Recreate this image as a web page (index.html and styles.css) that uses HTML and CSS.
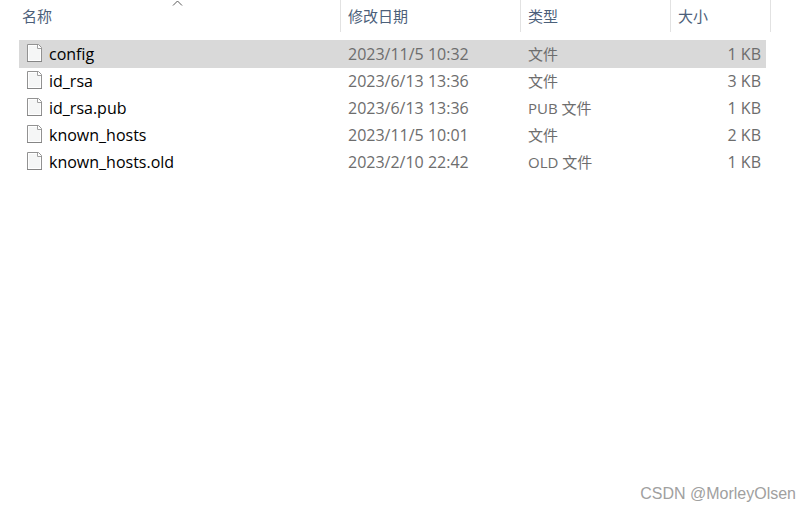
FILE: index.html
```
<!DOCTYPE html>
<html lang="zh-CN">
<head>
    <meta charset="UTF-8">
    <meta name="viewport" content="width=device-width, initial-scale=1.0">
    <title>.ssh</title>
    <link rel="stylesheet" href="styles.css">
</head>
<body>
    <!-- Shared file icon -->
    <svg class="symbols" aria-hidden="true">
        <symbol id="file-icon" viewBox="0 0 15 19">
            <path d="M.5.5H11.5L14.5 3.5V17.5H.5Z" fill="#fff" stroke="#929292"/>
            <path d="M2 2H10V5H13V16H2Z" fill="#f5f6f6"/>
            <path d="M10.5 1V4.5H14" fill="#fff" stroke="#a0a0a0"/>
            <path d="M0 17.5H15" stroke="#858585"/>
        </symbol>
    </svg>

    <!-- File List -->
    <main class="content">
        <table class="file-list">
            <colgroup>
                <col>
                <col class="col-date">
                <col class="col-type">
                <col class="col-size">
                <col class="col-end">
            </colgroup>
            <thead>
                <tr>
                    <th class="name" aria-sort="ascending">
                        <button type="button">名称</button>
                        <svg class="sort-arrow" viewBox="0 0 11 6" aria-hidden="true">
                            <path d="M1 5.5L5.5 1L10 5.5" fill="none" stroke="#5a5a5a"/>
                        </svg>
                    </th>
                    <th><button type="button">修改日期</button></th>
                    <th><button type="button">类型</button></th>
                    <th colspan="2"><button type="button">大小</button></th>
                </tr>
            </thead>
            <tbody>
                <tr class="selected">
                    <td class="name"><div class="file"><svg><use href="#file-icon"/></svg>config</div></td>
                    <td>2023/11/5 10:32</td>
                    <td class="type">文件</td>
                    <td class="size">1 KB</td>
                    <td class="end"></td>
                </tr>
                <tr>
                    <td class="name"><div class="file"><svg><use href="#file-icon"/></svg>id_rsa</div></td>
                    <td>2023/6/13 13:36</td>
                    <td class="type">文件</td>
                    <td class="size">3 KB</td>
                    <td class="end"></td>
                </tr>
                <tr>
                    <td class="name"><div class="file"><svg><use href="#file-icon"/></svg>id_rsa.pub</div></td>
                    <td>2023/6/13 13:36</td>
                    <td class="type">PUB 文件</td>
                    <td class="size">1 KB</td>
                    <td class="end"></td>
                </tr>
                <tr>
                    <td class="name"><div class="file"><svg><use href="#file-icon"/></svg>known_hosts</div></td>
                    <td>2023/11/5 10:01</td>
                    <td class="type">文件</td>
                    <td class="size">2 KB</td>
                    <td class="end"></td>
                </tr>
                <tr>
                    <td class="name"><div class="file"><svg><use href="#file-icon"/></svg>known_hosts.old</div></td>
                    <td>2023/2/10 22:42</td>
                    <td class="type">OLD 文件</td>
                    <td class="size">1 KB</td>
                    <td class="end"></td>
                </tr>
            </tbody>
        </table>
    </main>

    <footer class="watermark">CSDN @MorleyOlsen</footer>
</body>
</html>
```
FILE: styles.css
```
/* Global Styles */
body {
    margin: 0;
    min-height: 100vh;
    display: flex;
    flex-direction: column;
    background-color: #fff;
    font-family: 'Open Sans', 'Noto Sans CJK SC', sans-serif;
    font-size: 16px;
    color: #6d6d6d;
}
.symbols {
    display: none;
}
.content {
    flex: 1;
    padding: 0 39px 0 19px;
}

/* File List Styles */
.file-list {
    width: 100%;
    table-layout: fixed;
    border-collapse: separate;
    border-spacing: 0;
}
.col-date {
    width: 180px;
}
.col-type {
    width: 150px;
}
.col-size {
    width: 95px;
}
.col-end {
    width: 5px;
}

/* Column Headers */
.file-list th {
    position: relative;
    height: 32px;
    padding: 0;
    border-right: 1px solid #e2e2e2;
}
.file-list th button {
    display: block;
    width: 100%;
    padding: 0 7px;
    border: none;
    background: none;
    color: #4c607a;
    font-family: 'Noto Sans CJK SC', sans-serif;
    font-size: 15px;
    line-height: 32px;
    text-align: left;
}
.file-list th.name button {
    padding-left: 3px;
}
.sort-arrow {
    position: absolute;
    top: 0;
    left: calc(50% - 7px);
    width: 11px;
    height: 6px;
}

/* Rows */
.file-list tbody::before {
    content: '';
    display: table-row;
    height: 8px;
}
.file-list td {
    height: 27px;
    padding: 0 7px;
    line-height: 27px;
    white-space: nowrap;
}
.file-list .selected td {
    height: 28px;
    background-color: #d9d9d9;
}
.file-list td.name {
    padding-left: 8px;
    color: #000;
}
.file-list td.type {
    font-size: 15px;
}
.file-list td.size {
    padding-right: 5px;
    text-align: right;
}
.file-list td.end {
    padding: 0;
}
.file-list .selected td.end {
    background: none;
}
.file {
    display: flex;
    align-items: flex-start;
    gap: 7px;
}
.file svg {
    width: 15px;
    height: 19px;
    margin-top: 3px;
}

/* Watermark */
.watermark {
    padding: 0 14px 8px;
    font-family: 'Liberation Sans', sans-serif;
    font-size: 16px;
    line-height: 20px;
    text-align: right;
    color: #a0a0a0;
}
```
